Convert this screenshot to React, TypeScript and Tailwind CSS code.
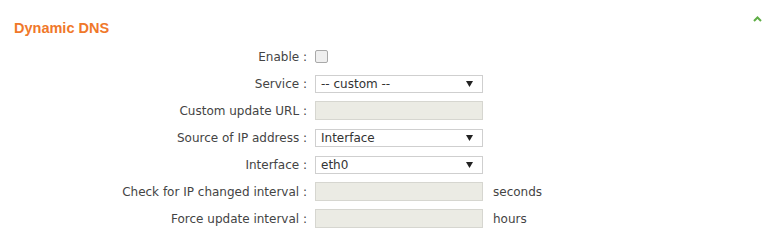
import React from "react";

const font = { fontFamily: '"DejaVu Sans", Verdana, sans-serif' };

function Label({ children }: { children: React.ReactNode }) {
  return (
    <div className="w-[307px] shrink-0 text-right text-[12px] text-[#444] whitespace-nowrap">
      {children}
    </div>
  );
}

function Select({ value }: { value: string }) {
  return (
    <div className="ml-2 flex h-[18px] w-[168px] items-center justify-between border border-[#cfcfcf] bg-white pl-[5px] pr-[9px] text-[12px] text-[#333]">
      <span>{value}</span>
      <svg width="7" height="6" viewBox="0 0 7 6">
        <path d="M0 0 L7 0 L3.5 6 Z" fill="#222" />
      </svg>
    </div>
  );
}

function Disabled() {
  return <div className="ml-2 h-[19px] w-[168px] border border-[#d6d6d0] bg-[#ebebe4]" />;
}

export default function App() {
  return (
    <div className="w-[771px] h-[246px] bg-white" style={font}>
      <div className="flex items-start justify-between pl-[14px] pr-[9px] pt-[19px]">
        <div
          className="text-[14.5px] font-bold text-[#f0782a] leading-[18px]"
          style={{ fontFamily: '"Liberation Sans", Arial, sans-serif' }}
        >
          Dynamic DNS
        </div>
        <svg width="9" height="6" viewBox="0 0 9 6" className="mt-[-3px]">
          <path d="M1 5 L4.5 1.5 L8 5" stroke="#5fae46" strokeWidth="2" fill="none" />
        </svg>
      </div>
      <div className="mt-[6px] flex flex-col">
        <div className="flex h-[27px] items-center">
          <Label>Enable :</Label>
          <div className="ml-2 h-[13px] w-[13px] rounded-[2px] border border-[#a9a9a9] bg-[#efefef]" />
        </div>
        <div className="flex h-[27px] items-center">
          <Label>Service :</Label>
          <Select value="-- custom --" />
        </div>
        <div className="flex h-[27px] items-center">
          <Label>Custom update URL :</Label>
          <Disabled />
        </div>
        <div className="flex h-[27px] items-center">
          <Label>Source of IP address :</Label>
          <Select value="Interface" />
        </div>
        <div className="flex h-[27px] items-center">
          <Label>Interface :</Label>
          <Select value="eth0" />
        </div>
        <div className="flex h-[27px] items-center">
          <Label>Check for IP changed interval :</Label>
          <Disabled />
          <span className="ml-[10px] text-[12px] text-[#444]">seconds</span>
        </div>
        <div className="flex h-[27px] items-center">
          <Label>Force update interval :</Label>
          <Disabled />
          <span className="ml-[10px] text-[12px] text-[#444]">hours</span>
        </div>
      </div>
    </div>
  );
}
